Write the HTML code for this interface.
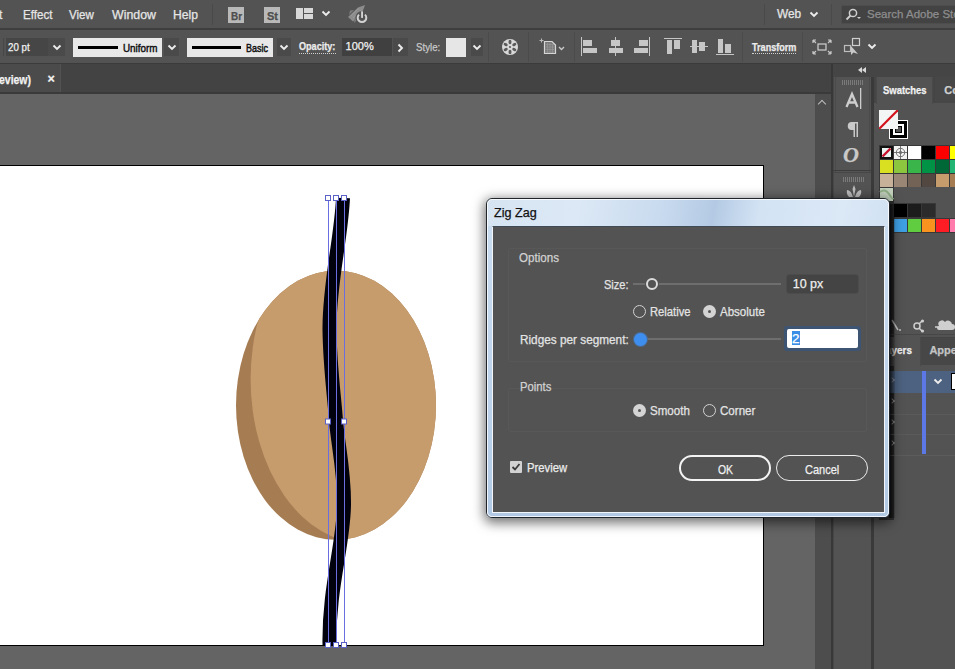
<!DOCTYPE html>
<html><head><meta charset="utf-8"><style>
*{margin:0;padding:0;box-sizing:border-box}
html,body{width:955px;height:669px;overflow:hidden;background:#535353;font-family:"Liberation Sans",sans-serif;position:relative}
.a{position:absolute}
.t{position:absolute;white-space:pre;line-height:1;transform-origin:0 0;-webkit-text-stroke:0.25px currentColor}
.dd{position:absolute;top:38px;height:18px;background:#4a4a4a}
.chev{position:absolute;width:5.5px;height:5.5px;border-right:1.8px solid #ececec;border-bottom:1.8px solid #ececec;transform:rotate(45deg)}
.sep{position:absolute;top:32px;width:1px;height:30px;background:#4b4b4b}
.ico{position:absolute;background:#c6c6c6}
</style></head><body>
<!-- ============ MENU BAR ============ -->
<div class="a" style="left:0;top:0;width:955px;height:28px;background:#535353"></div>
<div class="a" style="left:0;top:28px;width:955px;height:2px;background:#3e3e3e"></div>
<div class="t" style="left:-1px;top:8.94px;font-size:12px;font-weight:400;color:#e6e6e6;">t</div>
<div class="t" style="left:22.6px;top:8.94px;font-size:12px;font-weight:400;color:#e6e6e6;transform:scaleX(0.9682);">Effect</div>
<div class="t" style="left:68.8px;top:8.94px;font-size:12px;font-weight:400;color:#e6e6e6;transform:scaleX(0.9614);">View</div>
<div class="t" style="left:111.7px;top:8.94px;font-size:12px;font-weight:400;color:#e6e6e6;transform:scaleX(1.0307);">Window</div>
<div class="t" style="left:173.3px;top:8.94px;font-size:12px;font-weight:400;color:#e6e6e6;transform:scaleX(1.0086);">Help</div>
<div class="a" style="left:212px;top:4px;width:1px;height:21px;background:#4a4a4a"></div>
<div class="a" style="left:228px;top:7px;width:16px;height:16px;background:#b9b9b9"></div>
<div class="t" style="left:230.5px;top:10.61px;font-size:10.5px;font-weight:700;color:#4e4e4e;transform:scaleX(0.9424);">Br</div>
<div class="a" style="left:264px;top:7px;width:16px;height:16px;background:#b9b9b9"></div>
<div class="t" style="left:266.5px;top:10.61px;font-size:10.5px;font-weight:700;color:#4e4e4e;transform:scaleX(1.0476);">St</div>
<div class="a" style="left:296px;top:8px;width:7px;height:11px;background:#d8d8d8"></div>
<div class="a" style="left:304px;top:8px;width:9px;height:5px;background:#d8d8d8"></div>
<div class="a" style="left:304px;top:14px;width:9px;height:5px;background:#d8d8d8"></div>
<svg class="a" style="left:321.0px;top:9.5px" width="10" height="7" viewBox="0 0 10 7"><path d="M1.5 1.5 L5 5 L8.5 1.5" fill="none" stroke="#ececec" stroke-width="1.9"/></svg>
<svg class="a" style="left:343px;top:2px" width="28" height="24" viewBox="0 0 28 24">
 <path d="M5 15 L15 5.5 L22 3 L19.5 10 L10 19.5 Z" fill="#8c8c8c"/>
 <path d="M7 8.5 L11 8 L6 13 Z M11 21 L11.5 16.5 L16 16 Z" fill="#7c7c7c"/>
 <path d="M8 14 L16 6 M10 16 L18 8" stroke="#9a9a9a" stroke-width="0.8"/>
 <circle cx="19" cy="15.6" r="6.6" fill="#535353"/>
 <path d="M16 12.6 A4.3 4.3 0 1 0 22 12.6" fill="none" stroke="#d2d2d2" stroke-width="2"/>
 <rect x="18.1" y="9.3" width="1.9" height="6.6" fill="#d2d2d2"/>
</svg>
<div class="a" style="left:764px;top:4px;width:1px;height:21px;background:#4a4a4a"></div>
<div class="t" style="left:776.8px;top:8.44px;font-size:12px;font-weight:400;color:#e6e6e6;transform:scaleX(0.9849);">Web</div>
<svg class="a" style="left:809.0px;top:10.5px" width="10" height="7" viewBox="0 0 10 7"><path d="M1.5 1.5 L5 5 L8.5 1.5" fill="none" stroke="#ececec" stroke-width="1.9"/></svg>
<div class="a" style="left:831px;top:4px;width:1px;height:21px;background:#4a4a4a"></div>
<div class="a" style="left:841px;top:5px;width:120px;height:19px;background:#434343;border:1px solid #4d4d4d;border-radius:2px"></div>
<svg class="a" style="left:845px;top:7px" width="18" height="15" viewBox="0 0 18 15">
 <circle cx="8" cy="6" r="3.6" fill="none" stroke="#d0d0d0" stroke-width="1.5"/>
 <path d="M5.5 8.5 L1.5 12.5" stroke="#d0d0d0" stroke-width="1.8"/>
 <path d="M12 10 L16 10 L14 12 Z" fill="#d0d0d0"/>
</svg>
<div class="t" style="left:867px;top:8.77px;font-size:11.5px;font-weight:400;color:#8e8e8e;">Search Adobe Stock</div>

<!-- ============ CONTROL BAR ============ -->
<div class="a" style="left:0;top:30px;width:955px;height:33px;background:#535353"></div>
<div class="a" style="left:0;top:63px;width:955px;height:2px;background:#3b3b3b"></div>
<div class="a" style="left:3px;top:38px;width:1px;height:18px;background:#474747"></div>
<div class="a" style="left:6px;top:38px;width:42px;height:18px;background:#464646"></div>
<div class="t" style="left:7.7px;top:41.89px;font-size:11px;font-weight:400;color:#f2f2f2;transform:scaleX(0.8828);">20 pt</div>
<div class="dd" style="left:48px;width:17px"></div>
<svg class="a" style="left:52.0px;top:43.5px" width="10" height="7" viewBox="0 0 10 7"><path d="M1.5 1.5 L5 5 L8.5 1.5" fill="none" stroke="#ececec" stroke-width="1.9"/></svg>
<div class="a" style="left:73px;top:38px;width:89px;height:19px;background:#e8e8e8"></div>
<div class="a" style="left:78px;top:46px;width:40px;height:3px;background:#000"></div>
<div class="t" style="left:122.6px;top:42.89px;font-size:11px;font-weight:400;color:#111111;transform:scaleX(0.8957);-webkit-text-stroke:0.45px #111;">Uniform</div>
<div class="dd" style="left:164px;width:15px"></div>
<svg class="a" style="left:167.0px;top:43.5px" width="10" height="7" viewBox="0 0 10 7"><path d="M1.5 1.5 L5 5 L8.5 1.5" fill="none" stroke="#ececec" stroke-width="1.9"/></svg>
<div class="a" style="left:187px;top:38px;width:86px;height:19px;background:#e8e8e8"></div>
<div class="a" style="left:192px;top:46px;width:49px;height:3px;background:#000"></div>
<div class="t" style="left:245.9px;top:42.89px;font-size:11px;font-weight:400;color:#111111;transform:scaleX(0.8139);-webkit-text-stroke:0.45px #111;">Basic</div>
<div class="dd" style="left:277px;width:14px"></div>
<svg class="a" style="left:279.0px;top:43.5px" width="10" height="7" viewBox="0 0 10 7"><path d="M1.5 1.5 L5 5 L8.5 1.5" fill="none" stroke="#ececec" stroke-width="1.9"/></svg>
<div class="t" style="left:299px;top:42.03px;font-size:10px;font-weight:700;color:#ececec;transform:scaleX(0.9071);">Opacity:</div>
<div class="a" style="left:299px;top:53px;width:37px;height:0;border-top:1px dotted #cfcfcf"></div>
<div class="a" style="left:342px;top:38px;width:50px;height:18px;background:#404040"></div>
<div class="t" style="left:345.6px;top:41.39px;font-size:11px;font-weight:400;color:#f2f2f2;">100%</div>
<div class="dd" style="left:393px;width:15px"></div>
<svg class="a" style="left:396.5px;top:43.0px" width="7" height="10" viewBox="0 0 7 10"><path d="M1.5 1.5 L5 5 L1.5 8.5" fill="none" stroke="#ececec" stroke-width="1.9"/></svg>
<div class="t" style="left:415.8px;top:42.41px;font-size:10.5px;font-weight:400;color:#c8c8c8;transform:scaleX(0.9214);">Style:</div>
<div class="a" style="left:446px;top:38px;width:20px;height:19px;background:#e6e6e6"></div>
<div class="dd" style="left:471px;width:12px"></div>
<svg class="a" style="left:472.0px;top:43.5px" width="10" height="7" viewBox="0 0 10 7"><path d="M1.5 1.5 L5 5 L8.5 1.5" fill="none" stroke="#ececec" stroke-width="1.9"/></svg>
<div class="sep" style="left:488px"></div>
<svg class="a" style="left:501px;top:38px" width="18" height="18" viewBox="0 0 18 18">
 <circle cx="9" cy="9" r="8" fill="#d9d9d9"/>
 <g fill="#5a5a5a"><ellipse cx="9" cy="4" rx="1.5" ry="2.2"/><ellipse cx="9" cy="14" rx="1.5" ry="2.2"/>
 <ellipse cx="4.7" cy="6.5" rx="1.5" ry="2.2" transform="rotate(-60 4.7 6.5)"/><ellipse cx="13.3" cy="6.5" rx="1.5" ry="2.2" transform="rotate(60 13.3 6.5)"/>
 <ellipse cx="4.7" cy="11.5" rx="1.5" ry="2.2" transform="rotate(60 4.7 11.5)"/><ellipse cx="13.3" cy="11.5" rx="1.5" ry="2.2" transform="rotate(-60 13.3 11.5)"/>
 <circle cx="9" cy="9" r="1.1"/></g>
</svg>
<div class="sep" style="left:528px"></div>
<svg class="a" style="left:538px;top:37px" width="30" height="20" viewBox="0 0 30 20">
 <path d="M6.5 4.5 H14 L17.5 8 V16.5 H6.5 Z" fill="#7a7a7a" stroke="#d6d6d6" stroke-width="1.2"/>
 <path d="M8 7.5 H16 M8 10 H16 M8 12.5 H16 M8 15 H16 M9.5 6 V16 M12 6 V16 M14.5 8 V16" stroke="#9c9c9c" stroke-width="0.6"/>
 <path d="M1.5 3.5 H5.5 M3.5 1.5 V5.5" stroke="#bbb" stroke-width="1"/>
 <path d="M21 10 L23.5 12.5 L26 10" fill="none" stroke="#c8c8c8" stroke-width="1.4"/>
</svg>
<div class="sep" style="left:574px"></div>
<div class="ico" style="left:581px;top:37px;width:1px;height:19px"></div>
<div class="ico" style="left:583px;top:40px;width:9px;height:6px"></div>
<div class="ico" style="left:583px;top:48px;width:14px;height:5px"></div>
<div class="ico" style="left:615px;top:37px;width:1px;height:19px"></div>
<div class="ico" style="left:611px;top:40px;width:9px;height:6px"></div>
<div class="ico" style="left:609px;top:48px;width:14px;height:5px"></div>
<div class="ico" style="left:649px;top:37px;width:1px;height:19px"></div>
<div class="ico" style="left:639px;top:40px;width:9px;height:6px"></div>
<div class="ico" style="left:634px;top:48px;width:14px;height:5px"></div>
<div class="ico" style="left:664px;top:38px;width:18px;height:1px"></div>
<div class="ico" style="left:667px;top:40px;width:5px;height:14px"></div>
<div class="ico" style="left:674px;top:40px;width:6px;height:9px"></div>
<div class="ico" style="left:690px;top:46px;width:18px;height:1px"></div>
<div class="ico" style="left:692px;top:40px;width:5px;height:13px"></div>
<div class="ico" style="left:699px;top:42px;width:6px;height:9px"></div>
<div class="ico" style="left:716px;top:54px;width:18px;height:1px"></div>
<div class="ico" style="left:718px;top:39px;width:5px;height:14px"></div>
<div class="ico" style="left:725px;top:44px;width:6px;height:9px"></div>
<div class="sep" style="left:742px"></div>
<div class="t" style="left:751.7px;top:42.53px;font-size:10px;font-weight:700;color:#ececec;transform:scaleX(0.9079);">Transform</div>
<div class="a" style="left:752px;top:53px;width:44px;height:0;border-top:1px dotted #cfcfcf"></div>
<div class="sep" style="left:802px"></div>
<svg class="a" style="left:812px;top:39px" width="20" height="16" viewBox="0 0 20 16">
 <rect x="6" y="5" width="8" height="6" fill="none" stroke="#d0d0d0" stroke-width="1.2"/>
 <path d="M1 1 L4 4 M1 1 H4 M1 1 V4 M19 1 L16 4 M19 1 H16 M19 1 V4 M1 15 L4 12 M1 15 H4 M1 15 V12 M19 15 L16 12 M19 15 H16 M19 15 V12" stroke="#c8c8c8" stroke-width="1.2"/>
</svg>
<svg class="a" style="left:843px;top:37px" width="20" height="19" viewBox="0 0 20 19">
 <rect x="9.5" y="1.5" width="7" height="7" fill="none" stroke="#cfcfcf" stroke-width="1.2"/>
 <rect x="1.5" y="8.5" width="6" height="6" fill="none" stroke="#bdbdbd" stroke-width="1.2"/>
 <path d="M8 9 L8 18 L10.5 15.5 L15 17 Z" fill="#c8c8c8"/>
</svg>
<svg class="a" style="left:867.0px;top:42.5px" width="10" height="7" viewBox="0 0 10 7"><path d="M1.5 1.5 L5 5 L8.5 1.5" fill="none" stroke="#ececec" stroke-width="1.9"/></svg>

<!-- ============ TAB BAR ============ -->
<div class="a" style="left:0;top:64px;width:833px;height:30px;background:#434343"></div>
<div class="a" style="left:0;top:64px;width:61px;height:28px;background:#4b4b4b"></div>
<div class="a" style="left:60px;top:64px;width:1px;height:28px;background:#525252"></div>
<div class="a" style="left:0;top:92px;width:833px;height:2px;background:#3a3a3a"></div>
<div class="t" style="left:-1px;top:73.84px;font-size:12px;font-weight:700;color:#f2f2f2;transform:scaleX(0.8722);">eview)</div>
<div class="t" style="left:47.5px;top:72.92px;font-size:12.5px;font-weight:700;color:#f2f2f2;">×</div>

<!-- ============ CANVAS ============ -->
<div class="a" style="left:0;top:94px;width:815px;height:575px;background:#646464"></div>
<div class="a" style="left:0;top:165px;width:764px;height:481px;background:#fff;border-top:1px solid #000;border-right:1px solid #000;border-bottom:1px solid #000"></div>
<!-- ============ RIGHT DOCK / PANELS ============ -->
<div class="a" style="left:815px;top:94px;width:17px;height:575px;background:#4d4d4d"></div>
<div class="a" style="left:819px;top:101px;width:6px;height:6px;border-left:1.5px solid #bdbdbd;border-top:1.5px solid #bdbdbd;transform:rotate(45deg)"></div>
<div class="a" style="left:831px;top:64px;width:2px;height:605px;background:#383838"></div>
<div class="a" style="left:833px;top:64px;width:122px;height:13px;background:#454545"></div>
<div class="a" style="left:858px;top:67px;width:0;height:0;border-top:3px solid transparent;border-bottom:3px solid transparent;border-right:4px solid #d8d8d8"></div>
<div class="a" style="left:862px;top:67px;width:0;height:0;border-top:3px solid transparent;border-bottom:3px solid transparent;border-right:4px solid #d8d8d8"></div>
<!-- dock column -->
<div class="a" style="left:833px;top:77px;width:39px;height:592px;background:#535353;border-left:1px solid #484848;border-right:1px solid #484848"></div>
<div class="a" style="left:835px;top:77px;width:35px;height:96px;border-left:1px solid #4b4b4b;border-right:1px solid #4b4b4b"></div>
<div class="a" style="left:842px;top:80px;width:21px;height:5px;background:repeating-linear-gradient(90deg,#7a7a7a 0 1px,transparent 1px 2px)"></div>
<svg class="a" style="left:843px;top:87px" width="22" height="24" viewBox="0 0 22 24">
 <path d="M3.5 20 L9 7 L14.5 20 M5.6 15.5 H12.4" fill="none" stroke="#cdcdcd" stroke-width="2.3"/>
 <rect x="17" y="1" width="1.3" height="21" fill="#cdcdcd"/>
</svg>
<svg class="a" style="left:845px;top:120px" width="15" height="18" viewBox="0 0 15 18">
 <path d="M7 2 H13 V17 H11.5 V3.5 H10 V17 H8.5 V10 H6.5 A4 4 0 0 1 7 2 Z" fill="#c9c9c9"/>
</svg>
<div class="t" style="left:843px;top:144px;font-family:'Liberation Serif',serif;font-style:italic;font-weight:bold;font-size:22px;color:#c9c9c9">O</div>
<div class="a" style="left:833px;top:170px;width:39px;height:1px;background:#3d3d3d"></div>
<div class="a" style="left:833px;top:172px;width:39px;height:1px;background:#474747"></div>
<div class="a" style="left:843px;top:177px;width:21px;height:5px;background:repeating-linear-gradient(90deg,#7a7a7a 0 1px,transparent 1px 2px)"></div>
<svg class="a" style="left:844px;top:184px" width="20" height="15" viewBox="0 0 20 15">
 <path d="M10 1 L11.5 5 L10 13 L8.5 5 Z M3 6 Q7 6 9 13 L5 13 Q2 10 3 6 Z M17 6 Q13 6 11 13 L15 13 Q18 10 17 6 Z" fill="#bdbdbd"/>
</svg>
<div class="a" style="left:871px;top:77px;width:3px;height:592px;background:#3a3a3a"></div>
<!-- panel -->
<div class="a" style="left:874px;top:77px;width:81px;height:592px;background:#535353"></div>
<div class="a" style="left:874px;top:77px;width:81px;height:26px;background:#454545"></div>
<div class="a" style="left:876px;top:77px;width:57px;height:27px;background:#535353;border-left:1px solid #4a4a4a;border-right:1px solid #4a4a4a"></div>
<div class="a" style="left:935px;top:77px;width:20px;height:26px;background:#474747"></div>
<div class="t" style="left:882.9px;top:84.69px;font-size:11px;font-weight:700;color:#f2f2f2;transform:scaleX(0.8591);">Swatches</div>
<div class="t" style="left:944.3px;top:84.69px;font-size:11px;font-weight:700;color:#cfcfcf;">Co</div>
<!-- fill/stroke -->
<div class="a" style="left:889px;top:120px;width:19px;height:19px;background:#000;border:1px solid #fff"></div>
<div class="a" style="left:893px;top:124px;width:11px;height:11px;border:2px solid #fff;background:#000"></div>
<div class="a" style="left:895px;top:126px;width:7px;height:7px;background:#535353;border:1px solid #000"></div>
<svg class="a" style="left:879px;top:110px" width="19" height="19" viewBox="0 0 19 19">
 <rect x="0" y="0" width="19" height="19" fill="#f4f6f6"/>
 <path d="M0 19 L19 0" stroke="#d4141c" stroke-width="2.2"/>
</svg>
<!-- swatch grid -->
<svg class="a" style="left:0;top:0" width="955" height="669" viewBox="0 0 955 669">
<rect x="879" y="145" width="76" height="42" fill="#383838"/>
<rect x="879" y="187" width="15" height="15" fill="#383838"/>
<rect x="879" y="203" width="57" height="30" fill="#383838"/><rect x="879" y="198" width="15" height="322" fill="#2e2e2e"/>
<rect x="936" y="218" width="19" height="15" fill="#383838"/>
<rect x="880" y="146" width="13" height="13" fill="#e9f4f3"/><rect x="881" y="147" width="11" height="11" fill="none" stroke="#111" stroke-width="2"/><path d="M882.5 156.5 L890.5 148.5" stroke="#c8102e" stroke-width="2.4"/>
<rect x="894" y="146" width="13" height="13" fill="#f2f2f2"/><g fill="none" stroke="#6a6a6a" stroke-width="0.9"><circle cx="900.5" cy="152.5" r="4.2"/><path d="M900.5 146 V159 M894 152.5 H907"/><circle cx="900.5" cy="152.5" r="1.3"/></g>
<rect x="908" y="146" width="13" height="13" fill="#ffffff"/>
<rect x="922" y="146" width="13" height="13" fill="#000000"/>
<rect x="936" y="146" width="13" height="13" fill="#ff0000"/>
<rect x="950" y="146" width="13" height="13" fill="#ffff00"/>
<rect x="880" y="160" width="13" height="13" fill="#d9e021"/>
<rect x="894" y="160" width="13" height="13" fill="#8cc63f"/>
<rect x="908" y="160" width="13" height="13" fill="#39b54a"/>
<rect x="922" y="160" width="13" height="13" fill="#009245"/>
<rect x="936" y="160" width="13" height="13" fill="#006837"/>
<rect x="950" y="160" width="13" height="13" fill="#22b573"/>
<rect x="880" y="174" width="13" height="13" fill="#c7b299"/>
<rect x="894" y="174" width="13" height="13" fill="#998675"/>
<rect x="908" y="174" width="13" height="13" fill="#736357"/>
<rect x="922" y="174" width="13" height="13" fill="#534741"/>
<rect x="936" y="174" width="13" height="13" fill="#c69c6d"/>
<rect x="950" y="174" width="13" height="13" fill="#a67c52"/>
<rect x="880" y="188" width="13" height="13" fill="#c2d0bc"/><path d="M880 192 Q885 188 889 194 T893 198" stroke="#8fae86" stroke-width="2" fill="none"/>

<rect x="894" y="204" width="13" height="13" fill="#000000"/>
<rect x="908" y="204" width="13" height="13" fill="#1c1c1c"/>
<rect x="922" y="204" width="13" height="13" fill="#2b2b2b"/>

<rect x="894" y="219" width="13" height="13" fill="#3fa0e4"/>
<rect x="908" y="219" width="13" height="13" fill="#5fcd3f"/>
<rect x="922" y="219" width="13" height="13" fill="#f7931e"/>
<rect x="936" y="219" width="13" height="13" fill="#ff1d25"/>
<rect x="950" y="219" width="13" height="13" fill="#ff7bac"/>
</svg>
<!-- bottom icons row of swatches panel -->
<div class="a" style="left:874px;top:334px;width:81px;height:1px;background:#474747"></div>
<svg class="a" style="left:889px;top:318px" width="66" height="16" viewBox="0 0 66 16">
 <path d="M3 2 L9 12" stroke="#bfbfbf" stroke-width="1.5"/><circle cx="11" cy="12" r="1" fill="#bfbfbf"/>
 <circle cx="28" cy="8" r="3" fill="none" stroke="#cfcfcf" stroke-width="1.5"/>
 <path d="M30 6 L33 3 M30 10 L33 13" stroke="#cfcfcf" stroke-width="1.5"/>
 <circle cx="33.5" cy="3" r="1.6" fill="#cfcfcf"/><circle cx="33.5" cy="13" r="1.6" fill="#cfcfcf"/>
 <path d="M50 12 H63 A3 3 0 0 0 63 6 A4 4 0 0 0 56 4 A3.5 3.5 0 0 0 50 8 A2 2 0 0 0 50 12 Z" fill="#cfcfcf"/>
 <path d="M46 9 H52" stroke="#cfcfcf" stroke-width="1.5"/>
</svg>
<!-- layers tabs -->
<div class="a" style="left:874px;top:337px;width:81px;height:28px;background:#454545"></div>
<div class="a" style="left:874px;top:337px;width:47px;height:29px;background:#535353;border-right:1px solid #4a4a4a"></div>
<div class="a" style="left:921px;top:338px;width:34px;height:27px;background:#474747"></div>
<div class="t" style="left:880px;top:345.09px;font-size:11px;font-weight:700;color:#eeeeee;transform:scaleX(0.9018);">Layers</div>
<div class="t" style="left:929.4px;top:345.09px;font-size:11px;font-weight:700;color:#c4c4c4;">Appe</div>
<!-- layer rows -->
<div class="a" style="left:874px;top:371px;width:81px;height:22px;background:#4d6280"></div>
<div class="a" style="left:874px;top:414px;width:81px;height:1px;background:#5a5a5a"></div>
<div class="a" style="left:874px;top:434px;width:81px;height:1px;background:#5a5a5a"></div>
<div class="a" style="left:874px;top:455px;width:81px;height:1px;background:#5c5c5c"></div>
<div class="a" style="left:922px;top:371px;width:4px;height:83px;background:#5c78e6"></div>
<svg class="a" style="left:933.0px;top:377.5px" width="10" height="7" viewBox="0 0 10 7"><path d="M1.5 1.5 L5 5 L8.5 1.5" fill="none" stroke="#ececec" stroke-width="1.9"/></svg>
<div class="a" style="left:951px;top:373px;width:6px;height:17px;background:#fff;border:1px solid #000"></div>
<div class="a" style="left:890px;top:378px;width:4px;height:4px;border-right:1.3px solid #9aa6b8;border-top:1.3px solid #9aa6b8;transform:rotate(45deg)"></div>
<div class="a" style="left:890px;top:399px;width:4px;height:4px;border-right:1.3px solid #aaaaaa;border-top:1.3px solid #aaaaaa;transform:rotate(45deg)"></div>
<div class="a" style="left:890px;top:420px;width:4px;height:4px;border-right:1.3px solid #aaaaaa;border-top:1.3px solid #aaaaaa;transform:rotate(45deg)"></div>
<div class="a" style="left:890px;top:441px;width:4px;height:4px;border-right:1.3px solid #aaaaaa;border-top:1.3px solid #aaaaaa;transform:rotate(45deg)"></div>
<!-- ============ ARTWORK ============ -->
<svg class="a" style="left:0;top:0" width="955" height="669" viewBox="0 0 955 669">
 <defs>
  <clipPath id="egg"><ellipse cx="336" cy="405.2" rx="100" ry="134.6"/></clipPath>
 </defs>
 <ellipse cx="336" cy="405.2" rx="100" ry="134.6" fill="#a67c52"/>
 <ellipse cx="365.2" cy="379.2" rx="114.6" ry="164.4" fill="#c69c6d" clip-path="url(#egg)"/>
 <path d="M343 198 C341 240 329 285 329.5 330 C330 368 334.5 398 336 421 C338 445 344.5 472 344 505 C343.5 545 328.5 588 329.5 645" fill="none" stroke="#02020e" stroke-width="14"/>
 <g fill="none" stroke="#6a6ee0" stroke-width="1">
  <path d="M328.5 198 V645 M336.5 198 V645 M344.5 198 V645"/>
 </g>
 <g fill="#fff" stroke="#5a62c8" stroke-width="1">
  <rect x="325.5" y="195.5" width="5" height="5"/><rect x="333.5" y="195.5" width="5" height="5"/><rect x="341.5" y="195.5" width="5" height="5"/>
  <rect x="325.5" y="419" width="5" height="5"/><rect x="341.5" y="419" width="5" height="5"/>
  <rect x="325.5" y="642.5" width="5" height="5"/><rect x="333.5" y="642.5" width="5" height="5"/><rect x="341.5" y="642.5" width="5" height="5"/>
 </g>
</svg>

<!-- ============ DIALOG ============ -->
<div class="a" style="left:486px;top:198px;width:404px;height:320px;border-radius:6px;box-shadow:0 3px 12px 2px rgba(0,0,0,0.55);"></div>
<div class="a" style="left:889px;top:204px;width:6px;height:314px;background:linear-gradient(90deg,rgba(0,0,0,0.75),rgba(0,0,0,0.1));"></div>
<div class="a" style="left:486px;top:198px;width:404px;height:320px;border-radius:6px;border:1px solid #1f252c;
 background:linear-gradient(100deg,#d6e4f2 0%,#dce8f5 20%,#c9dbef 38%,#b4cae4 50%,#d3e3f4 60%,#dbe8f6 78%,#c8dbf0 100%);"></div>
<div class="a" style="left:487px;top:226px;width:402px;height:291px;border-radius:0 0 5px 5px;background:linear-gradient(180deg,#c9dbef 0%,#bcd2ea 60%,#b2c9e5 100%);"></div>
<div class="a" style="left:487px;top:199px;width:402px;height:318px;border-radius:5px;border:1px solid rgba(255,255,255,0.8);"></div>
<div class="t" style="left:494.3px;top:206.67px;font-size:12.2px;font-weight:400;color:#111111;transform:scaleX(1.0332);">Zig Zag</div>
<div class="a" style="left:492px;top:226px;width:393px;height:287px;background:#8ea3ba;border:1px solid #f2f6fb;border-top-color:#3f4a55"></div>
<div class="a" style="left:493px;top:227px;width:391px;height:285px;background:#535353"></div>
<!-- groups -->
<div class="a" style="left:508px;top:248px;width:359px;height:114px;border:1px solid #585858;border-radius:2px"></div>
<div class="a" style="left:508px;top:388px;width:359px;height:44px;border:1px solid #585858;border-radius:2px"></div>
<div class="t" style="left:519.3px;top:252.42px;font-size:12.5px;font-weight:400;color:#d2d2d2;transform:scaleX(0.9282);">Options</div>
<div class="t" style="left:603.9px;top:279.22px;font-size:12.5px;font-weight:400;color:#e4e4e4;transform:scaleX(0.8814);">Size:</div>
<div class="t" style="left:519.5px;top:333.82px;font-size:12.5px;font-weight:400;color:#e4e4e4;transform:scaleX(0.9424);">Ridges per segment:</div>
<div class="t" style="left:519.5px;top:381.02px;font-size:12.5px;font-weight:400;color:#d2d2d2;transform:scaleX(0.9036);">Points</div>
<!-- size slider -->
<div class="a" style="left:633px;top:283px;width:148px;height:2px;background:#6e6e6e"></div>
<div class="a" style="left:645px;top:277px;width:14px;height:14px;border-radius:50%;background:#535353"></div>
<div class="a" style="left:646px;top:278px;width:12px;height:12px;border-radius:50%;border:2.2px solid #dcdcdc;background:#535353"></div>
<!-- size field -->
<div class="a" style="left:787px;top:275px;width:71px;height:18px;border-radius:3px;background:#444444;box-shadow:0 0 0 1px #4c4c4c"></div>
<div class="t" style="left:792.7px;top:277.82px;font-size:12.5px;font-weight:400;color:#eeeeee;">10 px</div>
<!-- relative / absolute radios -->
<div class="a" style="left:633px;top:305px;width:13px;height:13px;border-radius:50%;border:1.8px solid #d2d2d2"></div>
<div class="t" style="left:650.4px;top:305.72px;font-size:12.5px;font-weight:400;color:#e4e4e4;transform:scaleX(0.8988);">Relative</div>
<div class="a" style="left:703px;top:305px;width:13px;height:13px;border-radius:50%;background:#d4d4d4"></div>
<div class="a" style="left:708px;top:310px;width:3px;height:3px;border-radius:50%;background:#555"></div>
<div class="t" style="left:720px;top:305.72px;font-size:12.5px;font-weight:400;color:#e4e4e4;transform:scaleX(0.9207);">Absolute</div>
<!-- ridges slider -->
<div class="a" style="left:641px;top:338px;width:140px;height:2px;background:#6e6e6e"></div>
<div class="a" style="left:634px;top:333px;width:13px;height:13px;border-radius:50%;background:#3e8ef0;box-shadow:0 0 0 1px #4c6a8f"></div>
<!-- ridges field (focused) -->
<div class="a" style="left:784px;top:326px;width:77px;height:25px;border-radius:3px;background:#3d5572"></div>
<div class="a" style="left:787px;top:329px;width:71px;height:19px;border-radius:2px;background:#ffffff"></div>
<div class="a" style="left:792px;top:331px;width:8px;height:14px;background:#3a8ee6"></div>
<div class="t" style="left:792.3px;top:333.22px;font-size:12.5px;font-weight:400;color:#ffffff;transform:scaleX(1.0787);">2</div>
<!-- smooth / corner -->
<div class="a" style="left:633px;top:404px;width:13px;height:13px;border-radius:50%;background:#d4d4d4"></div>
<div class="a" style="left:638px;top:409px;width:3px;height:3px;border-radius:50%;background:#555"></div>
<div class="t" style="left:649.8px;top:405.02px;font-size:12.5px;font-weight:400;color:#e4e4e4;transform:scaleX(0.9259);">Smooth</div>
<div class="a" style="left:703px;top:404px;width:13px;height:13px;border-radius:50%;border:1.8px solid #d2d2d2"></div>
<div class="t" style="left:720px;top:405.02px;font-size:12.5px;font-weight:400;color:#e4e4e4;transform:scaleX(0.9262);">Corner</div>
<!-- preview -->
<div class="a" style="left:510px;top:461px;width:12px;height:12px;border-radius:1px;background:#d2d2d2"></div>
<svg class="a" style="left:510px;top:461px" width="12" height="12" viewBox="0 0 12 12"><path d="M2.5 6 L5 8.5 L9.5 3" fill="none" stroke="#3a3a3a" stroke-width="1.8"/></svg>
<div class="t" style="left:527.4px;top:462.02px;font-size:12.5px;font-weight:400;color:#ececec;transform:scaleX(0.9018);">Preview</div>
<!-- buttons -->
<div class="a" style="left:679px;top:455px;width:92px;height:26px;border-radius:13px;border:2px solid #f4f4f4"></div>
<div class="t" style="left:717.6px;top:462.60px;font-size:13px;font-weight:400;color:#f0f0f0;transform:scaleX(0.8033);">OK</div>
<div class="a" style="left:776px;top:455px;width:92px;height:26px;border-radius:13px;border:1.5px solid #ededed"></div>
<div class="t" style="left:804.7px;top:462.60px;font-size:13px;font-weight:400;color:#f0f0f0;transform:scaleX(0.8476);">Cancel</div>
</body></html>
